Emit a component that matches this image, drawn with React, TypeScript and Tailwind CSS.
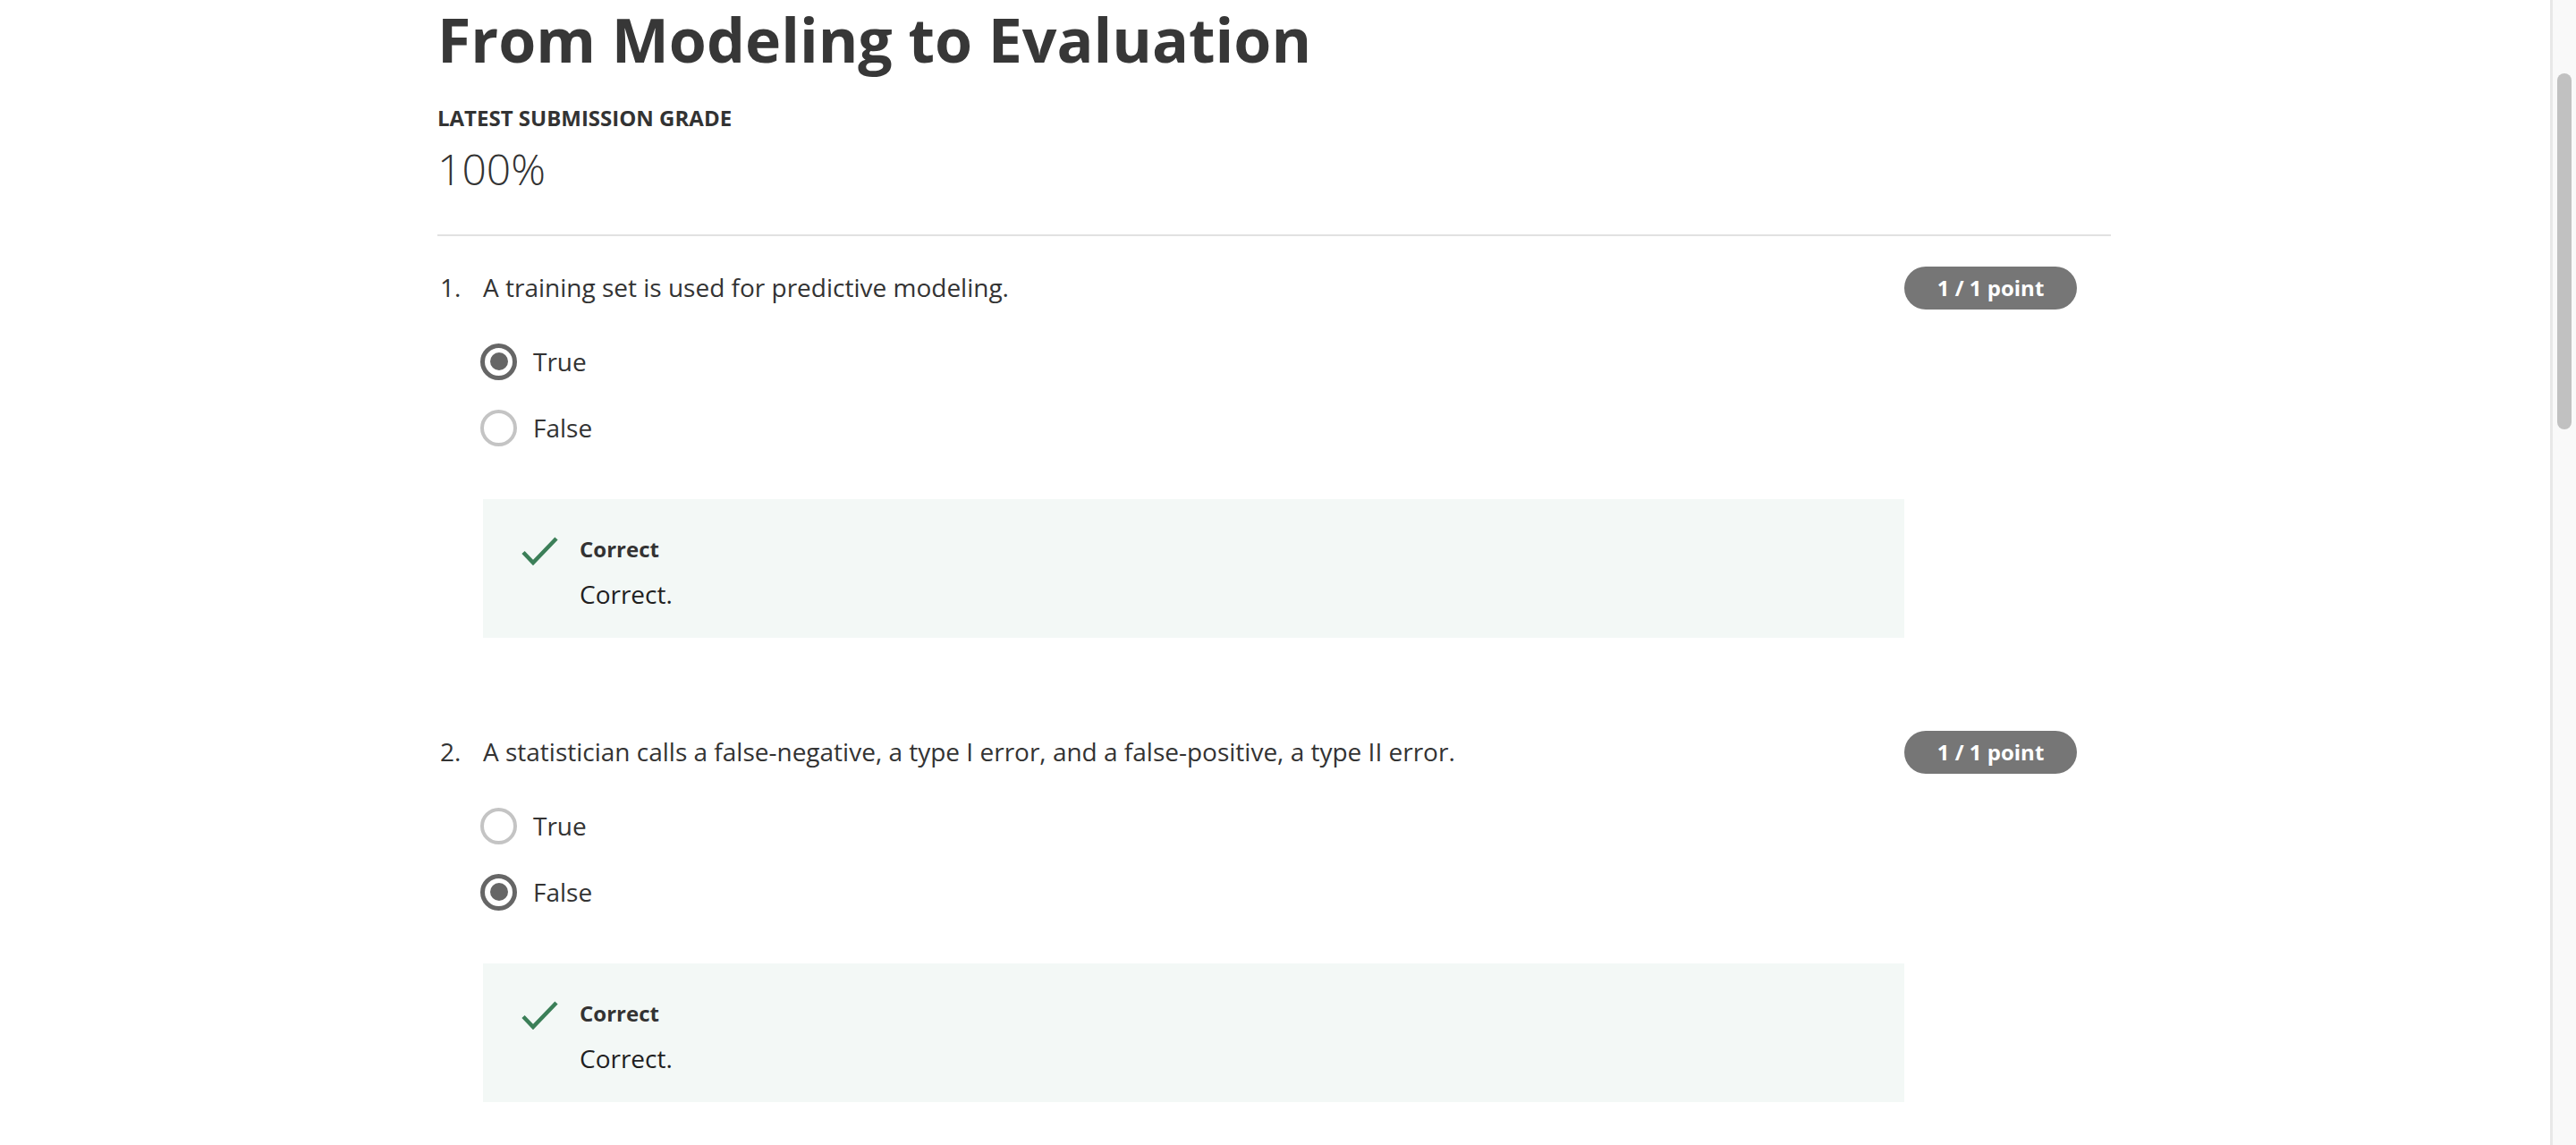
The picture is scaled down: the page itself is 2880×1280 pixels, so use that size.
import React from 'react';

type Question = {
  id: number;
  text: string;
  options: string[];
  selected: number;
};

const questions: Question[] = [
  {
    id: 1,
    text: 'A training set is used for predictive modeling.',
    options: ['True', 'False'],
    selected: 0,
  },
  {
    id: 2,
    text: 'A statistician calls a false-negative, a type I error, and a false-positive, a type II error.',
    options: ['True', 'False'],
    selected: 1,
  },
];

function Radio({ checked }: { checked: boolean }) {
  if (checked) {
    return (
      <span className="flex items-center justify-center w-[41px] h-[41px] rounded-full border-[5px] border-[#666666]">
        <span className="w-[20px] h-[20px] rounded-full bg-[#666666]" />
      </span>
    );
  }
  return (
    <span className="block w-[41px] h-[41px] rounded-full border-[4px] border-[#c4c4c4]" />
  );
}

function CheckIcon() {
  return (
    <svg width="42" height="32" viewBox="0 0 42 32" fill="none">
      <path
        d="M2 17.5 L13 29 L39 2"
        stroke="#3b7f58"
        strokeWidth="4.5"
        strokeLinecap="butt"
        strokeLinejoin="miter"
      />
    </svg>
  );
}

function QuestionBlock({ q }: { q: Question }) {
  return (
    <div className="flex items-start mb-[103px]">
      <div className="flex flex-1">
        <span className="w-[51px] pl-[3px] text-[28px] leading-[48px]">
          {q.id}.
        </span>
        <div className="flex-1 flex flex-col">
          <p className="text-[28px] leading-[48px]">{q.text}</p>
          <div className="flex flex-col gap-[26px] mt-[35px]">
            {q.options.map((opt, i) => (
              <label key={opt} className="flex items-center h-[48px] -ml-[3px]">
                <Radio checked={i === q.selected} />
                <span className="ml-[18px] text-[28px] leading-[48px]">
                  {opt}
                </span>
              </label>
            ))}
          </div>
          <div className="mt-[56px] bg-[#f3f8f6] pl-[43px] pt-[40px] pb-[29px] flex">
            <div className="w-[65px] pt-[2px]">
              <CheckIcon />
            </div>
            <div className="flex flex-col">
              <span className="text-[24px] leading-[32px] font-bold text-[#333333]">
                Correct
              </span>
              <span className="mt-[14px] text-[28px] leading-[40px] text-[#1f1f1f]">
                Correct.
              </span>
            </div>
          </div>
        </div>
      </div>
      <div className="w-[231px] pt-[1px]">
        <span className="inline-flex items-center justify-center w-[193px] h-[48px] rounded-full bg-[#767676] text-white text-[24px] font-bold">
          1 / 1 point
        </span>
      </div>
    </div>
  );
}

export default function App() {
  return (
    <div
      className="flex w-full h-[1280px] overflow-hidden bg-white text-[#333333]"
      style={{ fontFamily: '"Open Sans", "Noto Sans", sans-serif' }}
    >
      <main className="flex-1 pl-[489px] pr-[491px]">
        <h1 className="text-[68px] leading-[88px] font-bold text-[#373737]">
          From Modeling to Evaluation
        </h1>
        <div className="mt-[28px] text-[24px] leading-[32px] font-bold uppercase">
          Latest Submission Grade
        </div>
        <div className="mt-[9px] text-[48px] leading-[64px] font-light">
          100%
        </div>
        <hr className="mt-[41px] border-0 h-[2px] bg-[#e1e1e1]" />
        <div className="mt-[33px]">
          {questions.map((q) => (
            <QuestionBlock key={q.id} q={q} />
          ))}
        </div>
      </main>
      <div className="w-[29px] h-full bg-[#f9f9f9] border-l-[3px] border-[#e8e8e8] flex justify-center">
        <div className="mt-[82px] w-[16px] h-[398px] rounded-full bg-[#c1c1c1]" />
      </div>
    </div>
  );
}
